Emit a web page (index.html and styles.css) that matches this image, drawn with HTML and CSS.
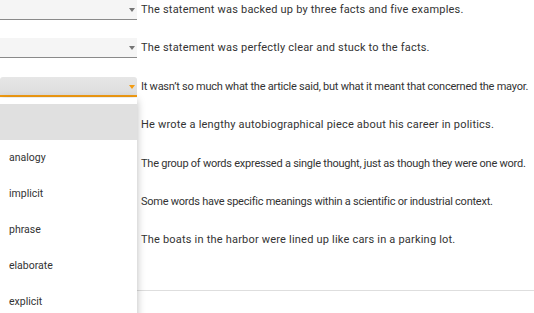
FILE: index.html
```html
<!DOCTYPE html>
<html>
<head>
<meta charset="utf-8">
<link rel="stylesheet" href="styles.css">
</head>
<body>
<div class="page">
  <div class="rows">
    <div class="row">
      <div class="select"><span class="arrow"></span></div>
      <p class="sentence">The statement was backed up by three facts and five examples.</p>
    </div>
    <div class="row">
      <div class="select"><span class="arrow"></span></div>
      <p class="sentence">The statement was perfectly clear and stuck to the facts.</p>
    </div>
    <div class="row">
      <div class="select focused"><span class="arrow"></span></div>
      <p class="sentence long">It wasn’t so much what the article said, but what it meant that concerned the mayor.</p>
    </div>
    <div class="row">
      <div class="select"><span class="arrow"></span></div>
      <p class="sentence">He wrote a lengthy autobiographical piece about his career in politics.</p>
    </div>
    <div class="row">
      <div class="select"><span class="arrow"></span></div>
      <p class="sentence long">The group of words expressed a single thought, just as though they were one word.</p>
    </div>
    <div class="row">
      <div class="select"><span class="arrow"></span></div>
      <p class="sentence long">Some words have specific meanings within a scientific or industrial context.</p>
    </div>
    <div class="row">
      <div class="select"><span class="arrow"></span></div>
      <p class="sentence">The boats in the harbor were lined up like cars in a parking lot.</p>
    </div>
  </div>
  <hr class="divider">
  <ul class="menu">
    <li class="item active"></li>
    <li class="item">analogy</li>
    <li class="item">implicit</li>
    <li class="item">phrase</li>
    <li class="item">elaborate</li>
    <li class="item">explicit</li>
  </ul>
</div>
</body>
</html>
```
FILE: styles.css
```css
html, body {
  margin: 0;
  padding: 0;
  background: #fff;
  overflow: hidden;
}
body {
  font-family: Roboto, "Liberation Sans", sans-serif;
  font-size: 10.5px;
  color: #333;
}
.page {
  position: relative;
  width: 534px;
  height: 313px;
  overflow: hidden;
}
.rows {
  display: flex;
  flex-direction: column;
}
.row {
  display: flex;
  align-items: flex-start;
  height: 38.4px;
}
.select {
  position: relative;
  width: 137px;
  height: 19px;
  background: #f5f5f5;
  border-bottom: 1px solid #8a8a8a;
  flex: none;
}
.select.focused {
  background: linear-gradient(#e6e6e6, #dddddd);
  border-bottom: 2px solid #f39c12;
  height: 18px;
  border-radius: 3px 3px 0 0;
}
.arrow {
  position: absolute;
  right: 2px;
  top: 8px;
  width: 0;
  height: 0;
  border-left: 3.5px solid transparent;
  border-right: 3.5px solid transparent;
  border-top: 4px solid #757575;
}
.select.focused .arrow {
  border-top-color: #f39c12;
}
.sentence {
  margin: 3px 0 0 4px;
  line-height: 14px;
  font-size: 11px;
  letter-spacing: 0.2px;
  white-space: nowrap;
}
.sentence.long {
  letter-spacing: -0.24px;
}
.divider {
  margin: 21px 0 0 0;
  border: 0;
  border-top: 1px solid #dedede;
}
.menu {
  position: absolute;
  left: 0;
  top: 98px;
  width: 137px;
  margin: 0;
  padding: 6px 0 0;
  list-style: none;
  background: #fff;
  box-shadow: 0 2px 8px rgba(0, 0, 0, 0.28);
  height: 240px;
}
.item {
  height: 36px;
  line-height: 36px;
  padding-left: 9px;
  color: #333;
}
.item.active {
  background: #e0e0e0;
}
```
